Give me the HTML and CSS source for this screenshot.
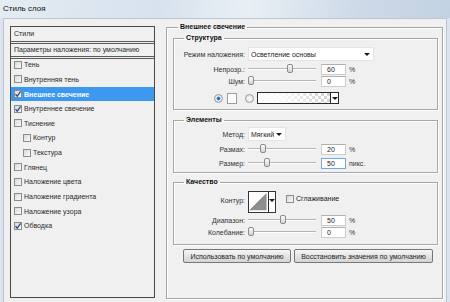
FILE: index.html
```html
<!DOCTYPE html>
<html lang="ru">
<head>
    <meta charset="UTF-8">
    <title>Стиль слоя</title>
    <link rel="stylesheet" href="styles.css">
</head>
<body>
    <div class="titlebar">Стиль слоя</div>

    <div class="dialog">
        <div class="styles-list">
            <div class="list-head">Стили</div>
            <div class="list-head">Параметры наложения: по умолчанию</div>
            <div class="items">
                <div class="item"><span class="cb"></span>Тень</div>
                <div class="item"><span class="cb"></span>Внутренняя тень</div>
                <div class="item active"><span class="cb"><svg viewBox="0 0 8 8"><path d="M1.5 4.2 L3.3 6.2 L6.6 1.4"/></svg></span>Внешнее свечение</div>
                <div class="item"><span class="cb"><svg viewBox="0 0 8 8"><path d="M1.5 4.2 L3.3 6.2 L6.6 1.4"/></svg></span>Внутреннее свечение</div>
                <div class="item"><span class="cb"></span>Тиснение</div>
                <div class="item sub"><span class="cb"></span>Контур</div>
                <div class="item sub"><span class="cb"></span>Текстура</div>
                <div class="item"><span class="cb"></span>Глянец</div>
                <div class="item"><span class="cb"></span>Наложение цвета</div>
                <div class="item"><span class="cb"></span>Наложение градиента</div>
                <div class="item"><span class="cb"></span>Наложение узора</div>
                <div class="item"><span class="cb"><svg viewBox="0 0 8 8"><path d="M1.5 4.2 L3.3 6.2 L6.6 1.4"/></svg></span>Обводка</div>
            </div>
        </div>

        <div class="settings">
            <fieldset class="group outer">
                <legend>Внешнее свечение</legend>

                <fieldset class="group structure">
                    <legend>Структура</legend>
                    <div class="row tall">
                        <span class="lbl">Режим наложения:</span>
                        <div class="select wide">Осветление основы<span class="arrow"></span></div>
                    </div>
                    <div class="row first">
                        <span class="lbl">Непрозр.:</span>
                        <div class="slider"><span class="thumb" style="left:39px"></span></div>
                        <span class="num">60</span><span class="unit">%</span>
                    </div>
                    <div class="row">
                        <span class="lbl">Шум:</span>
                        <div class="slider"><span class="thumb" style="left:0px"></span></div>
                        <span class="num">0</span><span class="unit">%</span>
                    </div>
                    <div class="row colors">
                        <span class="radio on"></span>
                        <span class="swatch"></span>
                        <span class="radio"></span>
                        <div class="gradient"><span class="grad-fill"></span><span class="grad-arrow"><span class="arrow"></span></span></div>
                    </div>
                </fieldset>

                <fieldset class="group elements">
                    <legend>Элементы</legend>
                    <div class="row tall">
                        <span class="lbl">Метод:</span>
                        <div class="select narrow">Мягкий<span class="arrow"></span></div>
                    </div>
                    <div class="row first">
                        <span class="lbl">Размах:</span>
                        <div class="slider"><span class="thumb" style="left:12px"></span></div>
                        <span class="num">20</span><span class="unit">%</span>
                    </div>
                    <div class="row first">
                        <span class="lbl">Размер:</span>
                        <div class="slider"><span class="thumb" style="left:16px"></span></div>
                        <span class="num focus">50</span><span class="unit">пикс.</span>
                    </div>
                </fieldset>

                <fieldset class="group quality">
                    <legend>Качество</legend>
                    <div class="row contour-row">
                        <span class="lbl">Контур:</span>
                        <div class="contour">
                            <svg viewBox="0 0 20 20" class="curve"><polygon points="1,19 19,1 19,19" fill="#8f8f8f"/><line x1="1" y1="19" x2="19" y2="1" stroke="#555" stroke-width="0.8"/></svg>
                            <span class="grad-arrow"><span class="arrow"></span></span>
                        </div>
                        <span class="check"><span class="cb"></span>Сглаживание</span>
                    </div>
                    <div class="row range">
                        <span class="lbl">Диапазон:</span>
                        <div class="slider"><span class="thumb" style="left:32px"></span></div>
                        <span class="num">50</span><span class="unit">%</span>
                    </div>
                    <div class="row">
                        <span class="lbl">Колебание:</span>
                        <div class="slider"><span class="thumb" style="left:0px"></span></div>
                        <span class="num">0</span><span class="unit">%</span>
                    </div>
                </fieldset>

                <div class="buttons">
                    <button class="btn b1">Использовать по умолчанию</button>
                    <button class="btn b2">Восстановить значения по умолчанию</button>
                </div>
            </fieldset>
        </div>
    </div>
</body>
</html>
```

FILE: styles.css
```css
body {
    margin: 0;
    width: 450px;
    height: 302px;
    overflow: hidden;
    background: #dbe4ee;
    font-family: "Liberation Sans", Arial, sans-serif;
    font-size: 7px;
    color: #2a2a2a;
}
.titlebar {
    height: 18px;
    line-height: 17px;
    padding-left: 3px;
    font-size: 8px;
    color: #111;
    background: linear-gradient(100deg, #e4ebf3 0%, #d7e2ed 35%, #e9eff5 55%, #ccd9e7 80%, #c3d2e3 100%);
}
.dialog {
    display: flex;
    height: 284px;
    margin: 0 3px;
    padding: 7px 0 0 6px;
    box-sizing: border-box;
    background: #f0f0f0;
    border: 1px solid #bcc6d0;
    border-bottom: none;
}

/* список стилей */
.styles-list {
    width: 145px;
    height: 272px;
    box-sizing: border-box;
    border: 1px solid #4a4a4a;
    background: #f0f0f0;
}
.list-head {
    height: 14px;
    line-height: 14px;
    padding-left: 3px;
    border-bottom: 3px double #5a5a5a;
}
.list-head + .list-head {
    height: 12px;
    line-height: 12px;
}
.items {
    margin-top: -1px;
}
.item {
    display: flex;
    align-items: center;
    height: 13.4px;
    margin-bottom: 1.27px;
    padding-left: 3px;
}
.item.sub {
    padding-left: 12px;
}
.item.active {
    background: #3d98ef;
    color: #fff;
    font-weight: bold;
}
.cb {
    display: inline-flex;
    width: 8px;
    height: 8px;
    box-sizing: border-box;
    margin-right: 2px;
    border: 1px solid #8c8c8c;
    background: linear-gradient(135deg, #d8d8d8, #fbfbfb);
}
.cb svg {
    width: 8px;
    height: 8px;
    margin: -1px;
}
.cb path {
    fill: none;
    stroke: #2b4a8f;
    stroke-width: 1.3;
}

/* правая часть */
.settings {
    margin: -4px 0 0 11px;
}
.group {
    margin: 0;
    padding: 0;
    border: 1px solid #a6a6a6;
    box-shadow: 1px 1px 0 #fff, inset 1px 1px 0 #fff;
}
.group legend {
    margin-left: 10px;
    padding: 0 2px;
    line-height: 10px;
    font-weight: bold;
    color: #111;
}
.outer {
    width: 277px;
    box-sizing: border-box;
    padding: 1px 4px 35px 6px;
}
.outer > legend {
    margin-left: 5px;
}
.structure {
    padding: 4px 0 4px 0;
}
.elements {
    margin-top: 5px;
    padding: 2px 0 3px 0;
}
.quality {
    margin-top: 4px;
    padding: 0 0 6px 0;
}

.row {
    display: flex;
    align-items: center;
    height: 12px;
}
.row.tall {
    height: 14px;
}
.row.first {
    margin-top: 2px;
}
.lbl {
    width: 71px;
    margin-right: 3px;
    text-align: right;
    color: #333;
}
.select {
    display: flex;
    align-items: center;
    justify-content: space-between;
    height: 14px;
    box-sizing: border-box;
    padding: 0 3px 0 2px;
    background: #fff;
    border: 1px solid #e4e4e4;
    color: #222;
}
.select.wide {
    width: 126px;
}
.select.narrow {
    width: 38px;
}
.arrow {
    width: 0;
    height: 0;
    border-left: 3px solid transparent;
    border-right: 3px solid transparent;
    border-top: 3px solid #1a1a1a;
}
.slider {
    position: relative;
    width: 68px;
    height: 12px;
    margin-right: 5px;
}
.slider::before {
    content: "";
    position: absolute;
    left: 0;
    right: 0;
    top: 5px;
    height: 1px;
    background: #b5b5b5;
    border-bottom: 1px solid #fff;
}
.thumb {
    position: absolute;
    top: 1px;
    width: 6px;
    height: 9px;
    box-sizing: border-box;
    border: 1px solid #8a8a8a;
    border-radius: 2px;
    background: linear-gradient(#fafafa, #d4d4d4);
}
.num {
    width: 25px;
    height: 11px;
    box-sizing: border-box;
    padding-left: 5px;
    line-height: 9px;
    background: #fff;
    border: 1px solid #cdcdcd;
    border-top-color: #b0b0b0;
    color: #222;
}
.num.focus {
    border-color: #6fa7e0;
}
.unit {
    margin-left: 3px;
    color: #333;
}

.row.colors {
    height: 14px;
    margin-top: 4px;
    padding-left: 40px;
}
.radio {
    width: 9px;
    height: 9px;
    box-sizing: border-box;
    border: 1px solid #9a9a9a;
    border-radius: 50%;
    background: radial-gradient(circle, #f4f4f4 30%, #d8d8d8 100%);
}
.radio.on {
    background: radial-gradient(circle, #1f63c9 0, #3b85e0 35%, #e8eef5 45%, #cfd6de 100%);
}
.swatch {
    width: 10px;
    height: 11px;
    box-sizing: border-box;
    margin: 0 8px 0 4px;
    background: #fff;
    border: 1px solid #9c9c9c;
}
.gradient {
    display: flex;
    width: 82px;
    height: 12px;
    box-sizing: border-box;
    margin-left: 3px;
    border: 1px solid #2a2a2a;
}
.grad-fill {
    flex: 1;
    background:
        linear-gradient(to right, #fff 0%, rgba(255, 255, 255, 0.85) 35%, rgba(255, 255, 255, 0) 100%),
        conic-gradient(#d0d0d0 25%, #fff 0 50%, #d0d0d0 0 75%, #fff 0) 0 0 / 6px 6px;
}
.grad-arrow {
    display: flex;
    justify-content: center;
    align-items: center;
    width: 7px;
    background: #fff;
    border-left: 1px solid #2a2a2a;
}

.contour-row {
    align-items: flex-start;
    height: 22px;
    margin-top: 4px;
}
.contour-row .lbl {
    padding-top: 5px;
    line-height: 10px;
}
.contour {
    display: flex;
    width: 28px;
    height: 22px;
    box-sizing: border-box;
    border: 1px solid #333;
    background: #fff;
}
.curve {
    width: 20px;
    height: 20px;
}
.contour .grad-arrow {
    align-items: flex-start;
    padding-top: 7px;
}
.check {
    display: flex;
    align-items: center;
    margin: 4px 0 0 10px;
    line-height: 8px;
    color: #222;
}
.row.range {
    margin-top: 1px;
}

.buttons {
    display: flex;
    gap: 3px;
    margin-top: 4px;
    padding-left: 10px;
}
.btn {
    height: 14px;
    padding: 0;
    font-family: "Liberation Sans", Arial, sans-serif;
    font-size: 7px;
    color: #222;
    background: linear-gradient(#f6f6f6, #e4e4e4 50%, #d5d5d5);
    border: 1px solid #777;
    border-radius: 2px;
}
.b1 {
    width: 108px;
}
.b2 {
    width: 139px;
}
```
